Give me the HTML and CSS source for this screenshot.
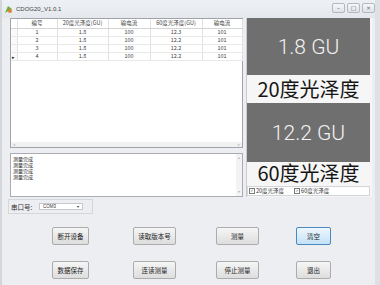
FILE: index.html
```html
<!DOCTYPE html>
<html>
<head>
  <title>CDOG20_V1.0.1</title>
  <link rel="stylesheet" href="styles.css">
</head>
<body>
  <div class="window">
    <div class="titlebar">
      <svg class="app-icon" width="9" height="9" viewBox="0 0 9 9">
        <path d="M1 8 L4 1 L8 4 Z" fill="#6fae3c"/>
        <circle cx="6" cy="6" r="2" fill="#d9843a"/>
      </svg>
      <span class="title">CDOG20_V1.0.1</span>
      <div class="controls">
        <span class="ctl">&#8211;</span>
        <span class="ctl">&#9633;</span>
        <span class="ctl">&#215;</span>
      </div>
    </div>

    <div class="client">
      <div class="main">
        <div class="left">
          <div class="grid">
            <table class="data">
              <colgroup>
                <col class="c-rh"><col class="c-no"><col class="c-20"><col class="c-i1"><col class="c-60"><col class="c-i2">
              </colgroup>
              <tr>
                <th></th><th>编号</th><th>20度光泽度(GU)</th><th>输电流</th><th>60度光泽度(GU)</th><th>输电流</th>
              </tr>
              <tr><td class="rh"></td><td>1</td><td>1.8</td><td>100</td><td>12.3</td><td>101</td></tr>
              <tr><td class="rh"></td><td>2</td><td>1.8</td><td>100</td><td>12.2</td><td>101</td></tr>
              <tr><td class="rh"></td><td>3</td><td>1.8</td><td>100</td><td>12.2</td><td>101</td></tr>
              <tr><td class="rh">&#9656;</td><td>4</td><td>1.8</td><td>100</td><td>12.2</td><td>101</td></tr>
            </table>
            <div class="grid-empty"></div>
            <div class="hscroll">
              <span class="arrow">&#9666;</span>
              <span class="arrow">&#9656;</span>
            </div>
          </div>

          <div class="log">
            <div class="log-text">
              <div class="log-line">测量完成</div>
              <div class="log-line">测量完成</div>
              <div class="log-line">测量完成</div>
              <div class="log-line">测量完成</div>
            </div>
            <div class="vscroll">
              <span class="arrow">&#9652;</span>
              <span class="arrow">&#9662;</span>
            </div>
          </div>
        </div>

        <div class="right">
          <div class="readout">1.8 GU</div>
          <div class="caption">20度光泽度</div>
          <div class="readout readout-b">12.2 GU</div>
          <div class="caption caption-b">60度光泽度</div>
          <div class="checks">
            <span class="check"><span class="box">&#10003;</span>20度光泽度</span>
            <span class="check"><span class="box">&#10003;</span>60度光泽度</span>
          </div>
        </div>
      </div>

      <div class="port">
        <span class="port-label">串口号:</span>
        <div class="combo">
          <span>COM3</span>
          <span class="combo-arrow">&#9662;</span>
        </div>
      </div>

      <div class="buttons">
        <button class="btn w37">断开设备</button>
        <button class="btn w43">读取版本号</button>
        <button class="btn w43">测量</button>
        <button class="btn w35 focus">清空</button>
        <button class="btn w37">数据保存</button>
        <button class="btn w43">连读测量</button>
        <button class="btn w43">停止测量</button>
        <button class="btn w35">退出</button>
      </div>
    </div>
  </div>
</body>
</html>
```

FILE: styles.css
```css
body {
  margin: 0;
  font-family: "Noto Sans CJK SC", "Liberation Sans", sans-serif;
  background-color: #eceef1;
}

.window {
  width: 380px;
  height: 285px;
  overflow: hidden;
  box-sizing: border-box;
  background-color: #eceef1;
  border-left: 2px solid #d3d7dc;
  border-right: 5px solid #dde1e6;
}

/* title bar */
.titlebar {
  height: 18px;
  display: flex;
  align-items: center;
  background: linear-gradient(#eef1f4, #e4e8ed);
}

.app-icon {
  margin-left: 2px;
}

.title {
  margin-left: 3px;
  font-family: "Liberation Sans", sans-serif;
  font-size: 6px;
  color: #444;
}

.controls {
  margin-left: auto;
  display: flex;
  gap: 2px;
  align-self: flex-start;
  margin-top: 3px;
}

.ctl {
  width: 11px;
  height: 8px;
  border: 1px solid #b3b8bf;
  border-radius: 2px;
  background: linear-gradient(#f7f8fa, #dfe3e8);
  font-family: "DejaVu Sans", sans-serif;
  font-size: 6px;
  line-height: 8px;
  text-align: center;
  color: #666;
}

/* client area */
.client {
  padding-left: 6px;
}

.main {
  display: flex;
  padding-left: 2px;
}

.left {
  width: 233px;
}

.grid {
  height: 130px;
  box-sizing: border-box;
  border: 1px solid #a0a4aa;
  background-color: #fff;
  display: flex;
  flex-direction: column;
}

.data {
  width: 100%;
  border-collapse: collapse;
  table-layout: fixed;
  font-size: 5.5px;
  color: #444;
}

.c-rh { width: 6px; }
.c-no { width: 40px; }
.c-20 { width: 51px; }
.c-i1 { width: 42px; }
.c-60 { width: 52px; }
.c-i2 { width: 40px; }

.data th,
.data td {
  padding: 0;
  text-align: center;
  line-height: 1;
  border-right: 1px solid #e1e1e1;
  border-bottom: 1px solid #e8e8e8;
  white-space: nowrap;
  overflow: hidden;
}

.data th {
  height: 9px;
  font-weight: normal;
  border-bottom: 1px solid #d4d4d4;
}

.data td {
  height: 7px;
}

.data .rh {
  font-size: 5px;
  color: #222;
  background-color: #fafafa;
}

.grid-empty {
  flex: 1;
}

.hscroll {
  height: 5px;
  background-color: #f1f1f1;
  display: flex;
  justify-content: space-between;
  align-items: center;
  padding: 0 2px;
}

.arrow {
  font-family: "DejaVu Sans", sans-serif;
  font-size: 4px;
  line-height: 1;
  color: #b5b5b5;
}

.log {
  margin-top: 5px;
  height: 44px;
  box-sizing: border-box;
  border: 1px solid #a9acb2;
  background-color: #fff;
  display: flex;
}

.log-text {
  flex: 1;
  padding: 2px 0 0 2px;
  font-size: 5px;
  color: #222;
}

.log-line {
  height: 6px;
  line-height: 6px;
  overflow: hidden;
}

.vscroll {
  width: 6px;
  background-color: #f3f3f3;
  display: flex;
  flex-direction: column;
  justify-content: space-between;
  align-items: center;
  padding: 2px 0;
}

/* readouts */
.right {
  width: 126px;
  margin-left: 3px;
  box-sizing: border-box;
  border-left: 1px solid #c9cbcf;
  padding-right: 2px;
  background-color: #f6f6f6;
}

.readout {
  height: 57px;
  background-color: #6f6f6f;
  color: #f2f2f2;
  font-family: Roboto, "Liberation Sans", sans-serif;
  font-weight: 300;
  font-size: 21px;
  display: flex;
  align-items: center;
  justify-content: center;
}

.readout-b {
  height: 59px;
  margin-top: 1px;
}

.caption {
  height: 27px;
  font-size: 20px;
  line-height: 27px;
  text-align: center;
  color: #151515;
}

.caption-b {
  height: 23px;
  line-height: 22px;
}

.checks {
  margin-top: 1px;
  height: 10px;
  box-sizing: border-box;
  border: 1px solid #d2d4d8;
  background-color: #fff;
  display: flex;
  align-items: center;
  gap: 10px;
  padding-left: 1px;
  font-size: 5.5px;
  color: #333;
}

.check {
  display: flex;
  align-items: center;
  gap: 1px;
}

.box {
  width: 4px;
  height: 4px;
  border: 1px solid #7a7a7a;
  font-family: "DejaVu Sans", sans-serif;
  font-size: 4px;
  line-height: 4px;
  text-align: center;
  color: #333;
}

/* serial port group */
.port {
  margin-top: 2px;
  width: 85px;
  height: 15px;
  box-sizing: border-box;
  border: 1px solid #d3d6da;
  display: flex;
  align-items: center;
  padding-left: 2px;
}

.port-label {
  font-size: 6.5px;
  color: #333;
  width: 28px;
}

.combo {
  width: 44px;
  height: 7px;
  box-sizing: border-box;
  border: 1px solid #c5c8cd;
  background-color: #fff;
  display: flex;
  align-items: center;
  justify-content: space-between;
  padding: 0 3px;
  font-family: "Liberation Sans", sans-serif;
  font-size: 4.5px;
  color: #333;
}

.combo-arrow {
  font-family: "DejaVu Sans", sans-serif;
  font-size: 4px;
}

/* command buttons */
.buttons {
  margin-top: 13px;
  margin-left: 44px;
  display: grid;
  grid-template-columns: 81px 83px 80px 35px;
  row-gap: 16px;
}

.btn {
  height: 18px;
  padding: 0;
  border: 1px solid #acacac;
  border-radius: 2px;
  background: linear-gradient(#f5f5f5, #dddddd);
  font-family: "Noto Sans CJK SC", sans-serif;
  font-size: 6.5px;
  color: #222;
}

.w35 { width: 35px; }
.w37 { width: 37px; }
.w43 { width: 43px; }

.btn.focus {
  border-color: #4a8ac0;
  background: linear-gradient(#eef7fd, #c3e2f7);
}
```
